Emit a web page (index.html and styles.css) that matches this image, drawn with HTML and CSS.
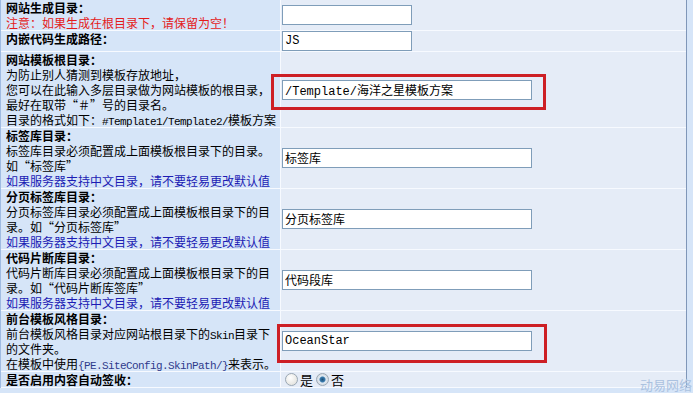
FILE: index.html
```html
<!DOCTYPE html>
<html lang="zh-CN">
<head>
    <meta charset="UTF-8">
    <title>网站选项</title>
    <link rel="stylesheet" href="styles.css">
</head>
<body>
    <div class="page">
        <div class="row">
            <div class="label">
                <b>网站生成目录：</b><br>
                <span class="warn">注意：如果生成在根目录下，请保留为空！</span>
            </div>
            <div class="field"><input type="text" class="short" value=""></div>
        </div>
        <div class="row">
            <div class="label"><b>内嵌代码生成路径：</b></div>
            <div class="field"><input type="text" class="short" value="JS"></div>
        </div>
        <div class="row">
            <div class="label">
                <b>网站模板根目录：</b><br>
                为防止别人猜测到模板存放地址，<br>
                您可以在此输入多层目录做为网站模板的根目录，最好在取带<span class="q">“#”</span>号的目录名。<br>
                目录的格式如下：<span class="en">#Template1/Template2/</span>模板方案
            </div>
            <div class="field"><input type="text" value="/Template/海洋之星模板方案"></div>
        </div>
        <div class="row">
            <div class="label">
                <b>标签库目录：</b><br>
                标签库目录必须配置成上面模板根目录下的目录。如<span class="q">“标签库”</span><br>
                <span class="tip">如果服务器支持中文目录，请不要轻易更改默认值</span>
            </div>
            <div class="field"><input type="text" value="标签库"></div>
        </div>
        <div class="row">
            <div class="label">
                <b>分页标签库目录：</b><br>
                分页标签库目录必须配置成上面模板根目录下的目录。如<span class="q">“分页标签库”</span><br>
                <span class="tip">如果服务器支持中文目录，请不要轻易更改默认值</span>
            </div>
            <div class="field"><input type="text" value="分页标签库"></div>
        </div>
        <div class="row">
            <div class="label">
                <b>代码片断库目录：</b><br>
                代码片断库目录必须配置成上面模板根目录下的目录。如<span class="q">“代码片断库签库”</span><br>
                <span class="tip">如果服务器支持中文目录，请不要轻易更改默认值</span>
            </div>
            <div class="field"><input type="text" value="代码段库"></div>
        </div>
        <div class="row">
            <div class="label">
                <b>前台模板风格目录：</b><br>
                前台模板风格目录对应网站根目录下的<span class="en">Skin</span>目录下的文件夹。<br>
                在模板中使用<span class="en code">{PE.SiteConfig.SkinPath/}</span>来表示。
            </div>
            <div class="field"><input type="text" value="OceanStar"></div>
        </div>
        <div class="row">
            <div class="label"><b>是否启用内容自动签收：</b></div>
            <div class="field radios">
                <label><input type="radio" name="autosign">是</label>
                <label><input type="radio" name="autosign" checked>否</label>
            </div>
        </div>

        <div class="mark mark-template"></div>
        <div class="mark mark-skin"></div>
    </div>
    <div class="watermark">动易网络</div>
</body>
</html>
```

FILE: styles.css
```css
body {
    margin: 0;
    background-color: #d6e5f8;
    font-family: "Noto Sans CJK SC", "Liberation Sans", sans-serif;
    font-size: 12px;
    line-height: 15px;
    color: #000;
    height: 393px;
    overflow: hidden;
    position: relative;
}
.page {
    position: relative;
    width: 685px;
    border-left: 1px solid #9fbbe2;
    border-right: 1px solid #7f96b8;
    background-color: #e5ecf7;
}
.row {
    display: flex;
    border-bottom: 1px solid #f7faff;
}
.label {
    width: 280px;
    box-sizing: border-box;
    padding: 0 1px 0 5px;
    background-color: #d6e5f8;
    border-right: 1px solid #f7faff;
}
.label b {
    font-weight: bold;
}
.warn {
    color: #e41b1b;
}
.tip {
    color: #1c1cb4;
}
.q {
    font-feature-settings: "fwid";
}
.en {
    font-family: "Liberation Mono", monospace;
    font-size: 11px;
    line-height: 10px;
    letter-spacing: -0.6px;
}
.code {
    color: #2f3a8c;
}
.field {
    flex: 1;
    display: flex;
    align-items: center;
    padding-left: 1px;
}
.field input[type="text"] {
    width: 250px;
    height: 20px;
    box-sizing: border-box;
    margin: 0;
    padding: 0 2px;
    border: 1px solid #7f9db9;
    background-color: #fff;
    font-family: "Liberation Mono", "Noto Sans CJK SC", monospace;
    font-size: 12px;
    color: #000;
}
.field input.short {
    width: 130px;
}
/* radio group */
.radios {
    padding-left: 4px;
    font-size: 13px;
    line-height: 15px;
}
.radios label {
    display: flex;
    align-items: center;
    margin-right: 3px;
}
.radios input[type="radio"] {
    appearance: none;
    -webkit-appearance: none;
    width: 13px;
    height: 13px;
    margin: 0 2px 0 0;
    border: 1px solid #9aa7b4;
    border-radius: 50%;
    background: radial-gradient(circle at 40% 35%, #ffffff, #dcdcd6);
    box-sizing: border-box;
}
.radios input[type="radio"]:checked {
    background: radial-gradient(circle, #1d4f78 0, #3a7cae 2.5px, #dfe9f3 3.5px, #d4d8dc 6px);
}
/* red annotation boxes */
.mark {
    position: absolute;
    border: 3px solid #cd1f25;
    box-sizing: border-box;
}
.mark-template {
    left: 270px;
    top: 74px;
    width: 275px;
    height: 36px;
}
.mark-skin {
    left: 276px;
    top: 324px;
    width: 270px;
    height: 39px;
}
.watermark {
    position: absolute;
    left: 640px;
    top: 377px;
    font-size: 13px;
    color: #abc2e0;
}
```
